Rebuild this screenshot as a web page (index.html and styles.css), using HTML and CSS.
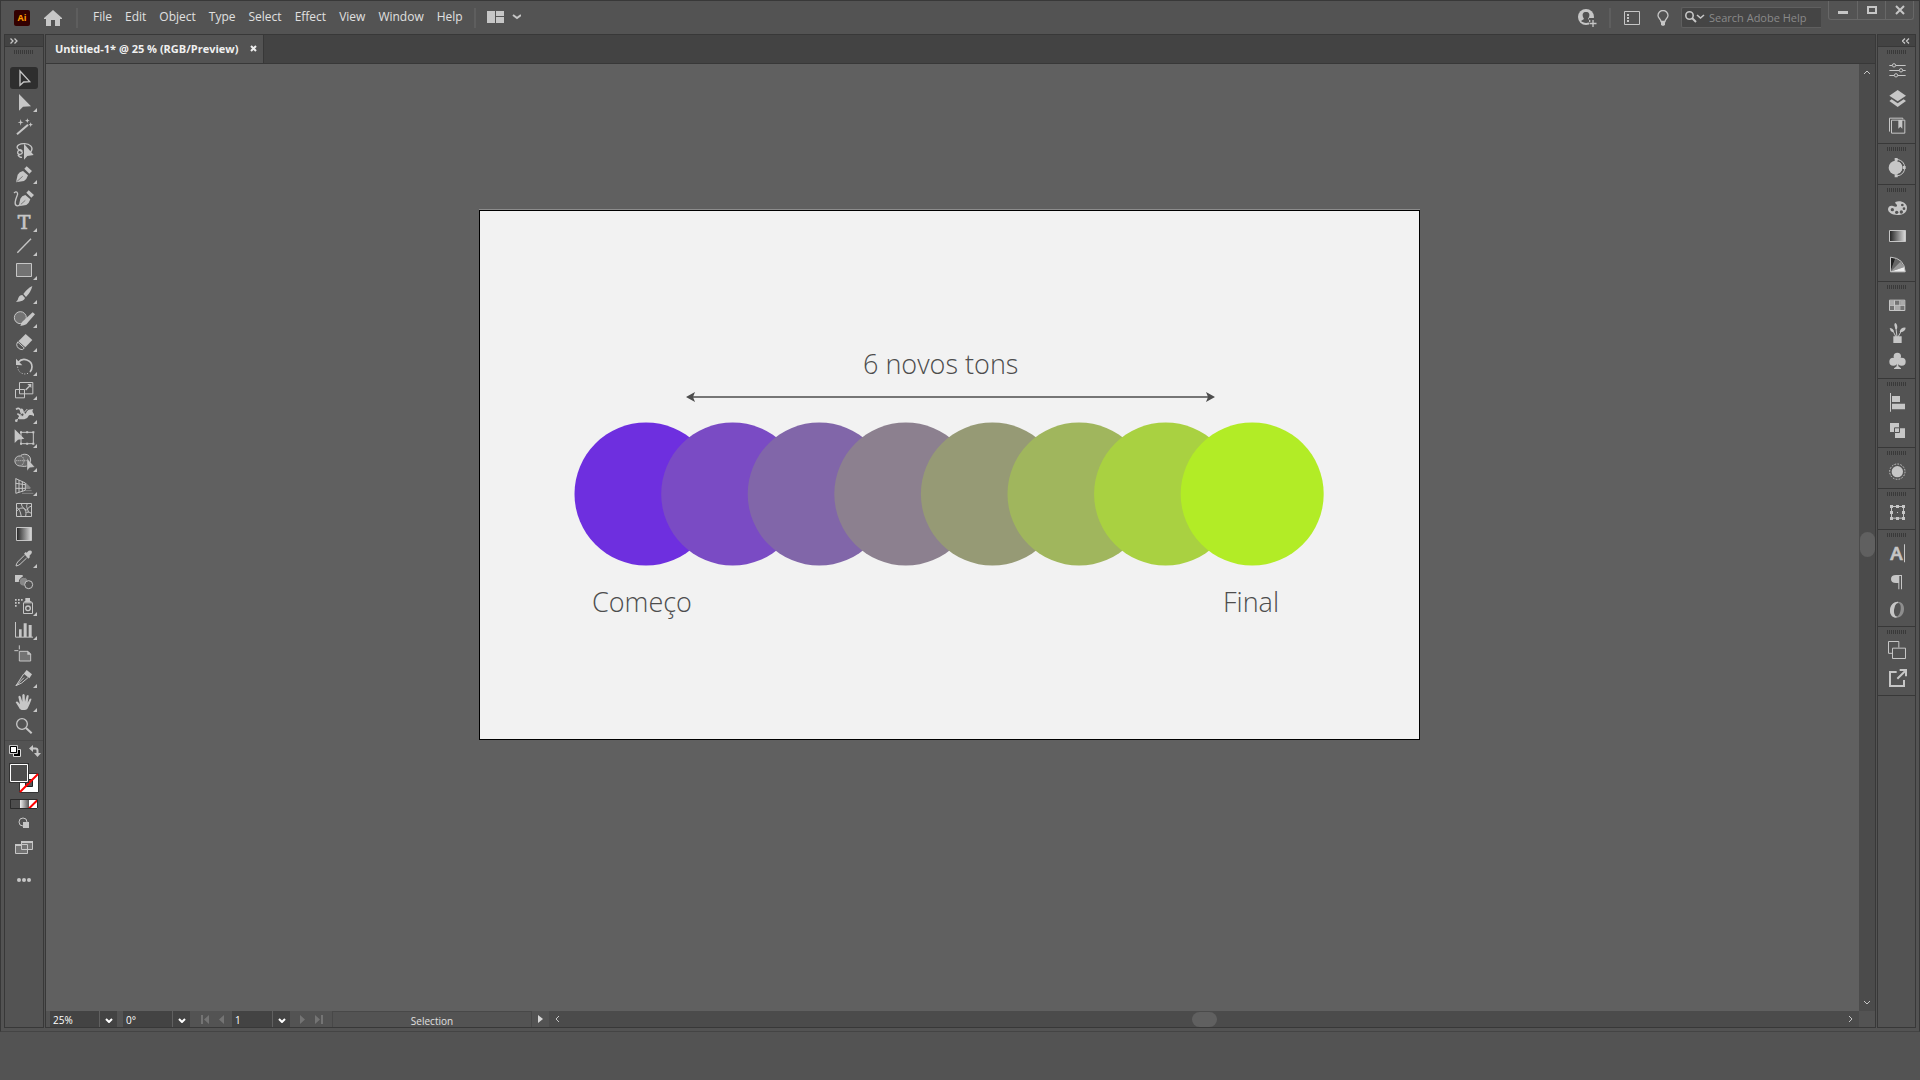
FILE: index.html
```html
<!DOCTYPE html>
<html lang="en">
<head>
<meta charset="utf-8">
<title>Untitled-1* @ 25 % (RGB/Preview)</title>
<link rel="stylesheet" href="styles.css">
</head>
<body>
<svg class="defs" aria-hidden="true">
  <defs>
    <linearGradient id="fade"><stop offset="0" stop-color="#222"/><stop offset="1" stop-color="#ddd"/></linearGradient>
    <linearGradient id="fadeLight"><stop offset="0" stop-color="#eee"/><stop offset="1" stop-color="#555"/></linearGradient>
  </defs>
</svg>
<div class="app">
  <header class="titlebar">
    <span class="logo">Ai</span>
    <button class="icon-btn home" aria-label="Home"><svg width="18" height="16" viewBox="0 0 18 16"><path class="f" d="M9 0L0 8v1h2v7h5v-6h4v6h5V9h2V8z"/></svg></button>
    <span class="divider"></span>
    <nav class="menu">
      <button>File</button><button>Edit</button><button>Object</button><button>Type</button><button>Select</button><button>Effect</button><button>View</button><button>Window</button><button>Help</button>
    </nav>
    <span class="divider"></span>
    <button class="icon-btn layout-btn" aria-label="Arrange documents"><svg width="34" height="12" viewBox="0 0 34 12"><path class="f" d="M0 0h8v12H0zM9 0h8v5H9zM9 6h8v6H9z"/><path class="s" stroke-width="2" d="M26 4l4 3 4-3"/></svg></button>
    <div class="title-right">
      <button class="icon-btn" aria-label="Account"><svg width="19" height="18" viewBox="0 0 19 18"><circle class="f" cx="8" cy="8" r="8"/><path fill="#535353" d="M8 3c-3 0-4 2-3 5l1 2-3 2c2 2 7 3 10 0l-3-2 1-2c1-3 0-5-3-5zM11 9h8v9h-8z"/><path class="s" stroke-width="1.3" d="M15 11v7M11.500 14.500h7"/></svg></button>
      <span class="divider"></span>
      <button class="icon-btn panel-btn" aria-label="Workspace"><svg width="16" height="14" viewBox="0 0 16 14"><path class="s" d="M.5.5h15v13H.5z"/><path fill="none" stroke="#c6c6c6" stroke-width="2" stroke-dasharray="2 1" d="M4 3v8"/></svg></button>
      <button class="icon-btn bulb-btn" aria-label="Discover"><svg width="12" height="16" viewBox="0 0 12 16"><path class="s" stroke-width="1.300" d="M4 11.500C4 9 1 8.500 1 5.500a5 5 0 0 1 10 0c0 3-3 3.500-3 6z"/><path class="f" d="M4 11h4v4l-2 1-2-1z"/></svg></button>
      <label class="search"><svg width="20" height="12" viewBox="0 0 20 12"><circle class="s" stroke-width="1.600" cx="4.500" cy="4.500" r="3.700"/><path class="s" stroke-width="2" d="M7 7l4 4"/><path class="s" stroke-width="1.600" d="M12 4l3.500 3L19 4"/></svg><input type="text" placeholder="Search Adobe Help" aria-label="Search Adobe Help"></label>
      <div class="winctl">
        <button aria-label="Minimize"><svg width="10" height="10" viewBox="0 0 10 10"><path class="f" d="M0 6h10v3H0z"/></svg></button>
        <button aria-label="Maximize"><svg width="10" height="10" viewBox="0 0 10 10"><path class="s" stroke-width="2" d="M1 2h8v6H1z"/></svg></button>
        <button aria-label="Close"><svg width="10" height="10" viewBox="0 0 10 10"><path class="s" stroke-width="2" d="M1 1l8 8M9 1L1 9"/></svg></button>
      </div>
    </div>
  </header>

  <main class="workspace">
    <aside class="tools" aria-label="Tools">
      <button class="panel-head" aria-label="Expand tools"><svg width="8" height="6" viewBox="0 0 8 6"><path class="s" stroke-width="1.300" d="M.5.5L3 3 .5 5.500M4.500.5L7 3 4.500 5.500"/></svg></button>
      <span class="grip"></span>
      <div class="tool-list">
        <button class="active" aria-label="Selection"><svg viewBox="15 0 114 72"><path class="s" stroke-width="4" d="M60 15v43l11-10 18-1z"/></svg></button>
        <button class="more" aria-label="Direct selection"><svg viewBox="15 0 114 72"><path class="f" d="M57 12v50l12-12 24-1z"/></svg></button>
        <button aria-label="Magic wand"><svg viewBox="15 0 114 72"><path class="s" stroke-width="6" d="M51 61l33-29"/><path class="f" d="M62 15l2 8 7 2-7 2-2 8-2-8-7-2 7-2zM82 13l2 5 5 2-5 2-2 5-2-5-5-2 5-2zM92 25l2 5 5 2-5 2-2 5-2-5-5-2 5-2z"/></svg></button>
        <button aria-label="Lasso"><svg viewBox="15 0 114 72"><path class="s" stroke-width="4" d="M52 30c-3-8 8-14 22-13 16 1 25 10 21 20-2 6-8 9-16 9M52 30c5 10 16 8 15 14-1 6-12 8-14 1-1-8 8-14 14-5M54 50c2 6 8 8 12 8"/><path class="f" d="M72 17v48l10-11 19-3z"/></svg></button>
        <button class="more" aria-label="Pen"><svg viewBox="15 0 114 72"><path class="f" d="M48 61l5-23q5-9 16-11l15 13q-3 11-12 17zM73 20l7-7 16 14-8 8z"/><path fill="none" stroke="#535353" stroke-width="2" d="M49 60l19-17"/></svg></button>
        <button aria-label="Curvature"><svg viewBox="15 0 114 72"><path class="f" d="M56 61l5-23q4-9 15-11l15 13q-3 11-12 17zM79 20l7-7 16 14-8 8z"/><path fill="none" stroke="#535353" stroke-width="2" d="M57 60l19-17"/><path class="s" stroke-width="4" d="M42 21c8-8 14 0 9 9-5 12-9 26-1 29 5 2 8-1 12-5"/></svg></button>
        <button class="more" aria-label="Type"><svg viewBox="15 0 114 72"><text class="f serif" x="72" y="57" font-size="57" text-anchor="middle">T</text></svg></button>
        <button class="more" aria-label="Line segment"><svg viewBox="15 0 114 72"><path class="s" stroke-width="4" d="M52 56l41-42"/></svg></button>
        <button class="more" aria-label="Rectangle"><svg viewBox="15 0 114 72"><path d="M49.500 16.500h45v39h-45z" fill="#737373" stroke="#c6c6c6" stroke-width="3"/></svg></button>
        <button class="more" aria-label="Paintbrush"><svg viewBox="15 0 114 72"><path class="f" d="M97 12q-15 7-27 24l8 9q15-15 19-33zM67 39l8 9q-2 11-27 12 6-5 7-12 3-9 12-9z"/></svg></button>
        <button class="more" aria-label="Shaper"><svg viewBox="15 0 114 72"><circle cx="61" cy="35" r="18" fill="#737373" stroke="#c6c6c6" stroke-width="3"/><path class="f" d="M98 19l7 6-26 30q-6 4-18 5l5-12z"/></svg></button>
        <button class="more" aria-label="Eraser"><svg viewBox="15 0 114 72"><path class="f" d="M77 12l20 18-21 22-21-18z"/><path class="s" stroke-width="3" d="M53 36l20 18-6 5q-16-2-17-16z"/></svg></button>
        <button class="more" aria-label="Rotate"><svg viewBox="15 0 114 72"><path class="s" stroke-width="5" d="M55 25c14-17 41-6 41 13 0 6-2 12-6 16"/><path class="s" stroke-width="3" stroke-dasharray="3 5" d="M53 38c1 24 27 26 35 17"/><path class="f" d="M48 14v19l19 1z"/></svg></button>
        <button class="more" aria-label="Scale"><svg viewBox="15 0 114 72"><path class="s" stroke-width="3" d="M46.500 34.500h27v25h-27zM58.500 13.500h40v34h-40z"/><path class="s" stroke-width="4" d="M77 36l12-12"/><path class="f" d="M82 18h12v12z"/></svg></button>
        <button class="more" aria-label="Width"><svg viewBox="15 0 114 72"><path class="s" stroke-width="5" d="M48 22c10-8 15 2 15 10M52 35c8 3 10 8 4 14"/><path class="f" d="M62 20q8-3 10 12l5 3q3-9 9-12l14-2q-6 8 2 15v7q-9-6-15-3-3 9-14 12H57q-2-6 6-12 2-10-1-20z"/><path class="s" stroke-width="3" d="M48 57L82 21"/><circle cx="67" cy="38" r="5" fill="#535353" stroke="#c6c6c6" stroke-width="3"/><circle class="f" cx="49" cy="56" r="4"/></svg></button>
        <button class="more" aria-label="Free transform"><svg viewBox="15 0 114 72"><path class="s" stroke-width="3" d="M63 19h37v34H63z"/><path class="s" stroke-width="6" stroke-dasharray="6 12.500" d="M60 19h43M60 53h43"/><path class="f" d="M44 10v41l10-10 19-3z"/></svg></button>
        <button class="more" aria-label="Shape builder"><svg viewBox="15 0 114 72"><path d="M61 18c5-8 30-9 31 12 0 16-13 22-29 18-24 2-24-32-2-30z" fill="#6a6a6a" stroke="#c6c6c6" stroke-width="3"/><path class="s" stroke-width="3" stroke-dasharray="3 3" d="M49 32h32M63 17c12 8 12 22 0 30"/><path class="f" stroke="#535353" d="M81 25v37l8-9 15-2z"/></svg></button>
        <button class="more" aria-label="Perspective grid"><svg viewBox="15 0 114 72"><path fill="#858585" d="M78 26l13 14v5H78z"/><path class="s" stroke-width="3" d="M47.500 13v45M47.500 14L76 27v22L47.500 58M57 18v37M67 23v29M47 28l29 4M47 43h29"/><path fill="none" stroke="#858585" stroke-width="3" d="M76 50h19M66 58h34"/></svg></button>
        <button aria-label="Mesh"><svg viewBox="15 0 114 72"><path class="s" stroke-width="3" d="M49.500 16.500h45v39h-45zM65 17c-3 13 18 13 12 38M83 17c-8 7 2 18 2 25M50 40c9-15 26-10 27-4 8 2 5-10 17-11M50 29q10 2 14 27M79 43q9-3 15 3"/></svg></button>
        <button aria-label="Gradient"><svg viewBox="15 0 114 72"><path d="M49.500 16.500h45v39h-45z" fill="url(#fade)" stroke="#c6c6c6" stroke-width="3"/></svg></button>
        <button class="more" aria-label="Eyedropper"><svg viewBox="15 0 114 72"><path class="f" d="M72 23l5-5 3 2 6-6q12-3 9 8l-7 8 2 3-5 5z"/><path class="s" stroke-width="3" d="M73 28L53 48q-4 5-5 12 7-1 12-5l20-19"/></svg></button>
        <button aria-label="Blend"><svg viewBox="15 0 114 72"><path class="f" d="M45 15h23v21H45z"/><circle cx="71" cy="35" r="13" fill="#888" stroke="#535353" stroke-width="3"/><circle cx="71" cy="35" r="11" fill="#888"/><circle cx="86" cy="44" r="12" fill="#535353" stroke="#c6c6c6" stroke-width="3"/></svg></button>
        <button class="more" aria-label="Symbol sprayer"><svg viewBox="15 0 114 72"><path class="s" stroke-width="3" d="M70.500 26.500h27v32h-27z"/><path class="f" d="M76 12h14v8l8 5H70l6-5zM45 15h5v5h-5zM54 15h5v5h-5zM63 15h5v5h-5zM45 24h5v5h-5zM54 24h5v5h-5zM45 33h5v5h-5z"/><circle class="s" stroke-width="4" cx="84" cy="43" r="7"/></svg></button>
        <button class="more" aria-label="Column graph"><svg viewBox="15 0 114 72"><path class="s" stroke-width="3" d="M46.500 12v45.500H99"/><path class="f" d="M57 34h8v23h-8zM71 16h9v41h-9zM86 21h9v36h-9z"/></svg></button>
        <button aria-label="Artboard"><svg viewBox="15 0 114 72"><path d="M58 28h26l8 8v21H58z" fill="#737373" stroke="#c6c6c6" stroke-width="3"/><path class="s" stroke-width="3" d="M58 10v12M43 26h12"/><path class="f" d="M82 26v12h12z"/></svg></button>
        <button class="more" aria-label="Slice"><svg viewBox="15 0 114 72"><path class="f" d="M80 12l16 13-8 12-17-14z"/><path class="s" stroke-width="3" d="M71 24L48 59l17-8 19-16M48 59l24-24"/></svg></button>
        <button class="more" aria-label="Hand"><svg viewBox="15 0 114 72"><path class="f" d="M60 58q-7-12-13-21 4-6 9 1l4 5-5-23q4-6 7 0l5 15V15q4-6 7 0l1 20 5-18q5-5 6 1l-3 20 6-11q6-4 5 2-5 14-9 22-3 9-11 9H66q-4 0-6-4z"/></svg></button>
        <button aria-label="Zoom"><svg viewBox="15 0 114 72"><circle class="s" stroke-width="4" cx="66" cy="30" r="16"/><path class="s" stroke-width="6" d="M78 42l17 16"/></svg></button>
      </div>
      <div class="paint">
        <div class="paint-row">
          <button class="icon-btn" aria-label="Default fill and stroke"><svg width="12" height="12" viewBox="0 0 12 12"><path fill="#000" stroke="#ddd" d="M4.500 4.500h7v7h-7z"/><path fill="#fff" stroke="#000" d="M1.500 1.500h6v6h-6z"/><path class="s" d="M.5.5h8v8h-8z"/></svg></button>
          <button class="icon-btn" aria-label="Swap fill and stroke"><svg width="12" height="12" viewBox="0 0 12 12"><path class="s" stroke-width="2" d="M3 3.500h3.500q2 0 2 2V9"/><path class="f" d="M4 0v7L0 3.500zM5 8h7l-3.500 4z"/></svg></button>
        </div>
        <svg class="swatches" width="30" height="30" viewBox="0 0 30 30" role="img" aria-label="Fill and stroke"><path fill="#fff" stroke="#333" d="M10.500 10.500h19v19h-19z"/><path fill="#535353" stroke="#222" d="M16.500 16.500h7v7h-7z"/><path stroke="#f00" stroke-width="2" d="M11 29L29 11"/><path fill="#4d4d4d" stroke="#333" stroke-width="3" d="M1.500 1.500h17v17h-17z"/><path fill="#4d4d4d" stroke="#fff" d="M1.500 1.500h17v17h-17z"/></svg>
        <svg class="modes" width="28" height="10" viewBox="0 0 28 10" role="img" aria-label="Color, gradient, none"><path fill="#4d4d4d" d="M0 0h10v10H0z"/><path fill="url(#fadeLight)" d="M10 0h9v10h-9z"/><path fill="#fff" d="M19 0h9v10h-9z"/><path stroke="#f00" stroke-width="2" d="M19 9.500l9-9"/><path fill="none" stroke="#2b2b2b" d="M.5.5h27v9H.5z"/></svg>
        <button class="icon-btn" aria-label="Drawing mode"><svg width="12" height="12" viewBox="0 0 12 12"><circle cx="5" cy="5" r="4" class="s"/><path class="f" d="M5 5h6v6H5z"/></svg></button>
        <button class="icon-btn" aria-label="Screen mode"><svg width="18" height="13" viewBox="0 0 18 13"><path fill="#737373" stroke="#c6c6c6" d="M.5 3.500h12v9H.5zM6.500.5h11v8h-11z"/><path class="f" d="M0 3h6v2H0zM6 0h12v2H6z"/></svg></button>
        <button class="icon-btn dots" aria-label="Edit toolbar"><svg width="14" height="4" viewBox="0 0 14 4"><circle class="f" cx="2" cy="2" r="2"/><circle class="f" cx="7" cy="2" r="2"/><circle class="f" cx="12" cy="2" r="2"/></svg></button>
      </div>
    </aside>

    <section class="document">
      <div class="tabs">
        <div class="tab"><span>Untitled-1* @ 25 % (RGB/Preview)</span><button class="icon-btn" aria-label="Close tab"><svg width="7" height="7" viewBox="0 0 7 7"><path stroke="#eee" stroke-width="2" d="M1 1l5 5M6 1L1 6"/></svg></button></div>
      </div>
      <div class="view">
        <div class="canvas">
          <div class="artboard">
            <svg width="939" height="528" viewBox="480 211 939 528" aria-hidden="true">
              <g stroke="#4d4d4d" fill="#4d4d4d"><path stroke-width="1.500" d="M692 397h517"/><path stroke="none" d="M686 397l9-5-2 5 2 5zM1215 397l-9-5 2 5-2 5z"/></g>
              <circle cx="646" cy="494" r="71.500" fill="#6e2fdf"/>
              <circle cx="732.700" cy="494" r="71.500" fill="#7a4bc4"/>
              <circle cx="819.200" cy="494" r="71.500" fill="#8166a9"/>
              <circle cx="905.800" cy="494" r="71.500" fill="#8c808f"/>
              <circle cx="992.400" cy="494" r="71.500" fill="#969a75"/>
              <circle cx="1079" cy="494" r="71.500" fill="#a0b65d"/>
              <circle cx="1165.600" cy="494" r="71.500" fill="#a9d141"/>
              <circle cx="1252.200" cy="494" r="71.500" fill="#b2ec26"/>
            </svg>
            <span class="label tones">6 novos tons</span>
            <span class="label start">Começo</span>
            <span class="label end">Final</span>
          </div>
        </div>
        <div class="vscroll"><svg width="8" height="5" viewBox="0 0 8 5"><path class="s" d="M1 4l3-3 3 3"/></svg><span class="thumb"></span><svg width="8" height="5" viewBox="0 0 8 5"><path class="s" d="M1 1l3 3 3-3"/></svg></div>
      </div>
      <footer class="status">
        <div class="combo"><input type="text" value="25%" aria-label="Zoom level"><button aria-label="Zoom presets"><svg width="8" height="5" viewBox="0 0 8 5"><path class="w" d="M1 1l3 3 3-3"/></svg></button></div>
        <div class="combo"><input type="text" value="0°" aria-label="Rotation"><button aria-label="Rotation presets"><svg width="8" height="5" viewBox="0 0 8 5"><path class="w" d="M1 1l3 3 3-3"/></svg></button></div>
        <div class="nav">
          <button class="icon-btn" aria-label="First artboard"><svg width="8" height="9" viewBox="0 0 8 9"><path class="dim" d="M0 0h2v9H0zM8 0v9L3 4.500z"/></svg></button>
          <button class="icon-btn" aria-label="Previous artboard"><svg width="6" height="9" viewBox="0 0 6 9"><path class="dim" d="M5 0v9L0 4.500z"/></svg></button>
        </div>
        <div class="combo short"><input type="text" value="1" aria-label="Artboard number"><button aria-label="Artboard list"><svg width="8" height="5" viewBox="0 0 8 5"><path class="w" d="M1 1l3 3 3-3"/></svg></button></div>
        <div class="nav next">
          <button class="icon-btn" aria-label="Next artboard"><svg width="6" height="9" viewBox="0 0 6 9"><path class="dim" d="M1 0v9l5-4.500z"/></svg></button>
          <button class="icon-btn" aria-label="Last artboard"><svg width="8" height="9" viewBox="0 0 8 9"><path class="dim" d="M6 0h2v9H6zM0 0v9l5-4.500z"/></svg></button>
        </div>
        <span class="current">Selection</span>
        <button class="play" aria-label="Status options"><svg width="5" height="8" viewBox="0 0 5 8"><path fill="#d8d8d8" d="M0 0v8l5-4z"/></svg></button>
        <div class="hscroll"><svg width="5" height="8" viewBox="0 0 5 8"><path class="s" d="M4 1L1 4l3 3"/></svg><span class="thumb"></span><svg width="5" height="8" viewBox="0 0 5 8"><path class="s" d="M1 1l3 3-3 3"/></svg></div>
        <span class="corner"></span>
      </footer>
    </section>

    <aside class="dock" aria-label="Panels">
      <button class="panel-head" aria-label="Expand panels"><svg width="8" height="6" viewBox="0 0 8 6"><path class="s" stroke-width="1.300" d="M3 .5L.5 3 3 5.500M7 .5L4.500 3 7 5.500"/></svg></button>
      <div class="group"><span class="grip"></span>
        <button aria-label="Properties"><svg viewBox="84 0 111 84"><path class="s" stroke-width="3" d="M118 28.500h49M118 43.500h49M118 58.500h49"/><g fill="#535353" stroke="#c6c6c6" stroke-width="3"><circle cx="132" cy="28" r="5"/><circle cx="153" cy="43" r="5"/><circle cx="138" cy="58" r="5"/></g></svg></button>
        <button aria-label="Layers"><svg viewBox="84 0 111 84"><path class="f" d="M143 18l25 17-25 17-25-17zM118 51l7-5 18 12 18-12 7 5-25 18z"/></svg></button>
        <button aria-label="Libraries"><svg viewBox="84 0 111 84"><path class="s" stroke-width="3" d="M124.500 24.500h40v39h-40zM120 58h-1.500V18.500h40V22"/><path class="f" d="M145 24h12v26l-6-6-6 6z"/></svg></button>
      </div>
      <div class="group"><span class="grip"></span>
        <button aria-label="Recolor"><svg viewBox="84 0 111 84"><circle class="f" cx="137" cy="44" r="21"/><path class="s" stroke-width="3" d="M141 19q23 4 23 25t-23 25"/><path fill="none" stroke="#535353" stroke-width="3" d="M141 23q18 4 18 21t-18 21"/><path class="f" d="M134 15h9v9h-9zM134 64h9v9h-9zM158 39h9v9h-9z"/></svg></button>
      </div>
      <div class="group"><span class="grip"></span>
        <button aria-label="Color"><svg viewBox="84 0 111 84"><path class="f" d="M136 24c14-7 35 2 35 17 0 16-15 22-29 22-16 0-28-8-28-17 0-8 7-13 15-10 5 2 11 4 12-1 1-5-7-5-5-11z"/><g fill="#535353"><circle cx="127" cy="47" r="5"/><circle cx="140" cy="55" r="5"/><circle cx="154" cy="54" r="5"/><circle cx="162" cy="44" r="4"/><circle cx="157" cy="33" r="4"/></g></svg></button>
        <button aria-label="Gradient panel"><svg viewBox="84 0 111 84"><path fill="url(#fade)" stroke="#c6c6c6" stroke-width="3" d="M118.500 25.500h48v33h-48z"/></svg></button>
        <button aria-label="Color guide"><svg viewBox="84 0 111 84"><path fill="#222" d="M121 65V22l15 3z"/><path fill="#666" d="M121 65l15-40 15 10z"/><path fill="#999" d="M121 65l30-30 12 16z"/><path fill="#eee" d="M121 65l42-14 3 14z"/><path class="s" stroke-width="3" d="M121.500 65.500v-44q42 3 44 44z"/></svg></button>
      </div>
      <div class="group"><span class="grip"></span>
        <button aria-label="Swatches"><svg viewBox="84 0 111 84"><path fill="#737373" stroke="#c6c6c6" stroke-width="3" d="M118.500 27.500h46v31h-46zM133.500 28v30M149.500 28v30M119 43h46"/><path fill="#aaa" d="M120 29h12v13h-12zM151 29h12v13h-12zM135 45h13v12h-13z"/></svg></button>
        <button aria-label="Brushes"><svg viewBox="84 0 111 84"><path class="f" d="M130 52h25v20h-25zM133 18q0-6 4-6 7 7 4 18h-5zM119 27q9 0 13 9l-4 4q-8-4-9-13zM149 38q4-14 18-12-1 11-15 14z"/><path class="s" stroke-width="3" d="M138 28l3 26M129 36l9 18M153 38l-9 16"/></svg></button>
        <button aria-label="Symbols"><svg viewBox="84 0 111 84"><circle class="f" cx="142" cy="28" r="11"/><circle class="f" cx="130" cy="44" r="12"/><circle class="f" cx="155" cy="44" r="12"/><path class="f" d="M140 36h5v22l8 6v2h-21v-2l8-6z"/></svg></button>
      </div>
      <div class="group"><span class="grip"></span>
        <button aria-label="Align"><svg viewBox="84 0 111 84"><path class="f" d="M120 15h3v56h-3zM126 24h24v18h-24zM126 47h39v17h-39z"/></svg></button>
        <button aria-label="Pathfinder"><svg viewBox="84 0 111 84"><path class="f" d="M120 21h27v27h-27zM135 37h30v29h-30z"/><path fill="#c6c6c6" stroke="#535353" stroke-width="3" d="M133.500 35.500h15v14h-15z"/></svg></button>
      </div>
      <div class="group"><span class="grip"></span>
        <button aria-label="Appearance"><svg viewBox="84 0 111 84"><circle class="f" cx="142" cy="44" r="17"/><circle class="s" stroke-width="3" stroke-dasharray="5 4" cx="142" cy="44" r="23"/></svg></button>
      </div>
      <div class="group"><span class="grip"></span>
        <button aria-label="Transform"><svg viewBox="84 0 111 84"><path class="s" stroke-width="3" d="M124.500 25.500h36v35h-36z"/><path class="f" d="M120 21h9v9h-9zM138 21h9v9h-9zM156 21h9v9h-9zM120 39h9v9h-9zM156 39h9v9h-9zM120 57h9v9h-9zM138 57h9v9h-9zM156 57h9v9h-9zM141 42h3v3h-3z"/></svg></button>
      </div>
      <div class="group"><span class="grip"></span>
        <button aria-label="Character"><svg viewBox="84 0 111 84"><text class="f sans" x="139" y="62" font-size="56" text-anchor="middle">A</text><path class="f" d="M162 16h3v54h-3z"/></svg></button>
        <button aria-label="Paragraph"><svg viewBox="84 0 111 84"><path class="f" d="M156 24h-18q-15 0-15 12t15 12h7v19h3V27h5v40h3z"/></svg></button>
        <button aria-label="OpenType"><svg viewBox="84 0 111 84"><path fill="#8e8e8e" fill-rule="evenodd" d="M144 20c-30 0-32 48-5 48 29 0 31-48 5-48zm0 4c14 0 9 40-4 40-13 0-9-40 4-40z"/><path class="f" d="M144 20c-30 0-32 48-5 48l1-4c-13 0-9-40 4-40z"/></svg></button>
      </div>
      <div class="group"><span class="grip"></span>
        <button aria-label="Artboards"><svg viewBox="84 0 111 84"><path class="s" stroke-width="3" d="M126 52h-10.500V16.500h31V35M127.500 36.500h39v31h-39z"/></svg></button>
        <button aria-label="Asset export"><svg viewBox="84 0 111 84"><path class="s" stroke-width="6" d="M140 24h-20v42h42V48M142 44l23-22"/><path class="f" d="M149 15h22v22h-6V21h-16z"/></svg></button>
      </div>
    </aside>
  </main>
</div>
</body>
</html>
```
FILE: styles.css
```css
:root {
  --bg: #535353;
  --dark: #434343;
  --line: #383838;
  --icon: #c6c6c6;
}

* { box-sizing: border-box; }

body {
  margin: 0;
  background: var(--bg);
  font-family: "Open Sans", "Noto Sans", sans-serif;
  font-size: 12px;
  color: #e0e0e0;
}

svg { display: block; flex: none; }
.defs { position: absolute; width: 0; height: 0; }
.f { fill: var(--icon); }
.s { fill: none; stroke: var(--icon); }
.w { fill: none; stroke: #fff; stroke-width: 2; }
.dim { fill: #747474; }
.serif { font-family: "DejaVu Serif", serif; stroke: var(--icon); stroke-width: 2px; }
.sans { font-family: "Open Sans", sans-serif; font-weight: 600; stroke: var(--icon); stroke-width: 2px; }

button {
  display: flex;
  align-items: center;
  justify-content: center;
  padding: 0;
  border: 0;
  background: none;
  color: inherit;
  font: inherit;
}

input {
  min-width: 0;
  border: 0;
  padding: 0;
  background: none;
  color: inherit;
  font: inherit;
  outline: 0;
}

.app {
  display: flex;
  flex-direction: column;
  height: calc(100vh - 48px);
  min-height: 960px;
  border: 1px solid var(--line);
  border-bottom-color: #444;
}

/* Title bar */
.titlebar {
  display: flex;
  align-items: center;
  height: 33px;
  flex: none;
  padding-left: 13px;
}
.logo {
  width: 16px;
  height: 16px;
  border-radius: 2px;
  background: #330000;
  color: #ff9a00;
  font-size: 9px;
  font-weight: 700;
  line-height: 16px;
  text-align: center;
}
.home { margin: 0 14px; }
.divider {
  width: 2px;
  height: 20px;
  background: #5e5e5e;
}
.menu {
  display: flex;
  gap: 13px;
  padding: 0 11px 2px 15px;
}
.layout-btn { margin-left: 11px; padding-bottom: 2px; }
.title-right {
  display: flex;
  align-items: center;
  align-self: stretch;
  margin-left: auto;
}
.title-right .divider { margin: 0 13px 0 12px; }
.bulb-btn { margin: 0 12px 0 17px; }
.search {
  display: flex;
  align-items: center;
  gap: 4px;
  width: 140px;
  height: 21px;
  padding: 0 0 1px 3px;
  border: 1px solid #5f5f5f;
  border-right: 0;
  border-radius: 2px 0 0 2px;
  background: #454545;
  font-size: 11px;
}
.search input { flex: 1; }
.search input::placeholder { color: #8a8a8a; opacity: 1; }
.winctl {
  display: flex;
  align-self: flex-start;
  margin: 0 5px 0 7px;
  border: 1px solid #676767;
  border-top: 0;
  border-radius: 0 0 3px 3px;
}
.winctl button { width: 28px; height: 18px; }
.winctl button + button { border-left: 1px solid #676767; }

/* Workspace */
.workspace {
  display: flex;
  flex: 1;
  min-height: 0;
  gap: 1px;
  margin: 0 3px 3px;
}
.tools, .dock, .document {
  display: flex;
  flex-direction: column;
  border: 1px solid var(--line);
}
.tools { width: 40px; }
.dock { width: 39px; }
.document { flex: 1; min-width: 0; }

.panel-head {
  flex: none;
  height: 12px;
  padding: 0 5px;
  border-bottom: 1px solid var(--line);
  background: var(--dark);
  justify-content: flex-start;
}
.dock .panel-head { justify-content: flex-end; }
.grip {
  flex: none;
  width: 20px;
  height: 4px;
  margin: 3px 9px 2px;
  background: repeating-linear-gradient(90deg, #393939 0 1px, transparent 1px 2px);
}
.tools .grip { margin-bottom: 12px; }
.tool-list { border-bottom: 1px solid #494949; padding-bottom: 2px; }
.tool-list button {
  position: relative;
  width: 38px;
  height: 24px;
}
.tool-list svg { width: 38px; height: 24px; }
.tool-list .active {
  width: 28px;
  height: 22px;
  margin: 1px 5px;
  border-radius: 3px;
  background: #2e2e2e;
}
.tool-list .more::after {
  content: "";
  position: absolute;
  right: 6px;
  bottom: 2px;
  border: 2px solid transparent;
  border-right-color: var(--icon);
  border-bottom-color: var(--icon);
}
.paint {
  display: flex;
  flex-direction: column;
  align-items: center;
  padding-top: 4px;
}
.paint-row {
  display: flex;
  gap: 8px;
  padding-left: 2px;
  margin-bottom: 6px;
}
.modes { margin: 6px 0 8px; }
.paint .icon-btn + .icon-btn { margin-top: 12px; }
.paint .paint-row .icon-btn + .icon-btn { margin-top: 0; }
.paint .icon-btn + .dots { margin-top: 24px; }

/* Document */
.tabs {
  display: flex;
  flex: none;
  height: 29px;
  border-bottom: 1px solid var(--line);
  background: var(--dark);
}
.tab {
  display: flex;
  align-items: center;
  gap: 12px;
  padding: 0 6px 2px 9px;
  border-right: 1px solid var(--line);
  background: var(--bg);
  color: #f0f0f0;
  font-size: 11px;
  font-weight: 700;
}
.view {
  display: flex;
  flex: 1;
  min-height: 0;
}
.canvas {
  position: relative;
  flex: 1;
  overflow: hidden;
  background: #606060;
}
.artboard {
  position: absolute;
  left: 433px;
  top: 146px;
  border: 1px solid #000;
  background: #f2f2f2;
  box-shadow: 0 -1px 0 #8c8c8c;
}
.label {
  position: absolute;
  color: #4d4d4d;
  font-size: 27px;
  font-weight: 300;
  line-height: 36px;
  white-space: nowrap;
}
.tones { left: 383px; top: 135px; }
.start { left: 112px; top: 373px; }
.end { left: 743px; top: 373px; }

.vscroll, .hscroll {
  position: relative;
  display: flex;
  align-items: center;
  justify-content: space-between;
  background: #4b4b4b;
}
.vscroll {
  flex-direction: column;
  width: 16px;
  padding: 6px 0;
}
.hscroll { flex: 1; padding: 0 6px; }
.thumb {
  position: absolute;
  border-radius: 8px;
  background: #606060;
}
.vscroll .thumb { top: 49.4%; width: 15px; height: 25px; }
.hscroll .thumb { left: 49.1%; width: 25px; height: 15px; }

.status {
  display: flex;
  flex: none;
  height: 16px;
  padding-left: 4px;
  font-size: 10px;
  color: #fff;
}
.combo {
  display: flex;
  width: 67px;
  margin-right: 6px;
  background: var(--dark);
}
.combo input { flex: 1; padding: 2px 0 0 3px; }
.combo button {
  width: 18px;
  padding-top: 2px;
  border-left: 1px solid #606060;
}
.combo + .combo { margin-right: 4px; }
.combo.short { width: 58px; margin: 0; }
.nav {
  display: flex;
  align-items: center;
  justify-content: center;
  gap: 10px;
  width: 38px;
}
.nav.next { width: 42px; }
.current {
  width: 200px;
  border: 1px solid #484848;
  border-bottom: 0;
  line-height: 18px;
  text-align: center;
  color: #e0e0e0;
}
.play { width: 17px; }
.corner { width: 16px; }

/* Panel dock */
.group {
  display: flex;
  flex-direction: column;
  padding-bottom: 3px;
  border-bottom: 1px solid var(--line);
}
.group button, .group svg {
  width: 37px;
  height: 28px;
}
```
